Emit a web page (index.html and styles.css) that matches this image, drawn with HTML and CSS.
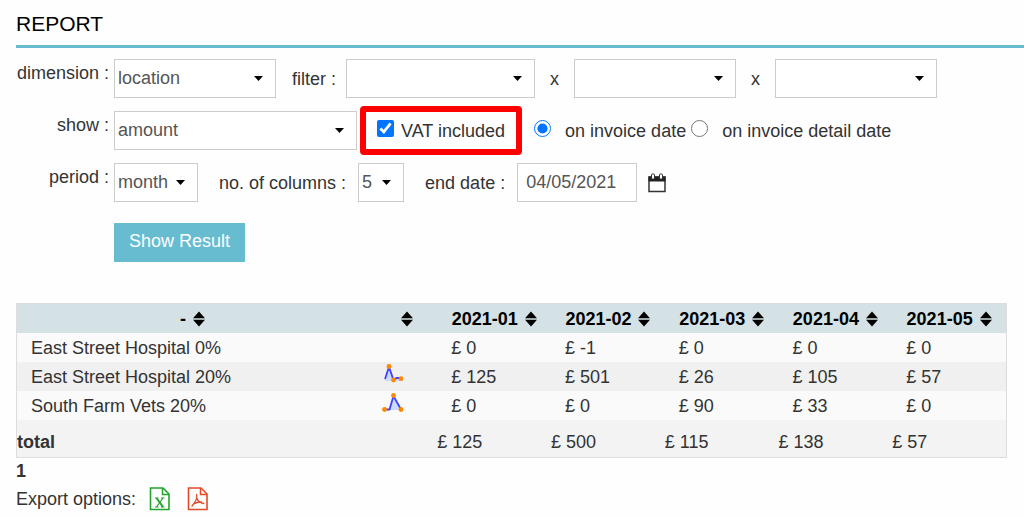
FILE: index.html
```html
<!DOCTYPE html>
<html lang="en">
<head>
<meta charset="utf-8">
<title>Report</title>
<meta name="viewport" content="width=device-width, initial-scale=1">
<link rel="stylesheet" href="styles.css">
</head>
<body>
<svg class="defs" width="0" height="0" aria-hidden="true">
  <symbol id="sort" viewBox="0 0 12 16"><path d="M6 .5 12 7.300H0zM0 8.700h12l-6 6.800z"/></symbol>
</svg>
<main class="page">
  <h1 class="title">REPORT</h1>

  <form class="filters">
    <div class="row">
      <label class="row-label" for="dimension">dimension :</label>
      <div class="controls">
        <select class="select medium" id="dimension"><option>location</option></select>
        <label class="text filter-text" for="filter1">filter :</label>
        <select class="select large" id="filter1"><option></option></select>
        <label class="text times" for="filter2">x</label>
        <select class="select medium" id="filter2"><option></option></select>
        <label class="text times" for="filter3">x</label>
        <select class="select medium" id="filter3"><option></option></select>
      </div>
    </div>

    <div class="row">
      <label class="row-label" for="show">show :</label>
      <div class="controls">
        <select class="select wide" id="show"><option>amount</option></select>
        <label class="vat"><input class="tick" type="checkbox" checked>VAT included</label>
        <label class="choice"><input class="tick" type="radio" name="basis" checked>on invoice date</label>
        <label class="choice"><input class="tick" type="radio" name="basis">on invoice detail date</label>
      </div>
    </div>

    <div class="row">
      <label class="row-label" for="period">period :</label>
      <div class="controls">
        <select class="select small" id="period"><option>month</option></select>
        <label class="text inline-text" for="columns">no. of columns :</label>
        <select class="select tiny" id="columns"><option>5</option></select>
        <label class="text inline-text" for="end">end date :</label>
        <input class="date" id="end" type="text" value="04/05/2021">
        <button class="calendar" type="button" aria-label="Pick a date">
          <svg width="18" height="20" viewBox="0 0 18 20"><path d="M1 4h16v14.500H1z" fill="#fff" stroke="#333" stroke-width="1.500"/><path d="M.5 3.500h17v5H.5z" fill="#222"/><rect x="3.500" y="1" width="3" height="5" rx="1" fill="#fff" stroke="#333"/><rect x="11.500" y="1" width="3" height="5" rx="1" fill="#fff" stroke="#333"/></svg>
        </button>
      </div>
    </div>

    <button class="submit" type="button">Show Result</button>
  </form>

  <table class="results">
    <colgroup><col><col class="col-spark"><col class="col-month"><col class="col-month"><col class="col-month"><col class="col-month"><col class="col-month"></colgroup>
    <thead>
      <tr>
        <th>- <svg class="sort"><use href="#sort"/></svg></th>
        <th class="spark-head"><svg class="sort"><use href="#sort"/></svg></th>
        <th>2021-01 <svg class="sort"><use href="#sort"/></svg></th>
        <th>2021-02 <svg class="sort"><use href="#sort"/></svg></th>
        <th>2021-03 <svg class="sort"><use href="#sort"/></svg></th>
        <th>2021-04 <svg class="sort"><use href="#sort"/></svg></th>
        <th>2021-05 <svg class="sort"><use href="#sort"/></svg></th>
      </tr>
    </thead>
    <tbody>
      <tr><td>East Street Hospital 0%</td><td></td><td>£ 0</td><td>£ -1</td><td>£ 0</td><td>£ 0</td><td>£ 0</td></tr>
      <tr>
        <td>East Street Hospital 20%</td>
        <td><svg class="spark" viewBox="0 0 24 20"><path d="M3 15 7 3l4.500 13 3-2H19v3H3z" fill="#cbdcfa"/><path d="M3 15 7 3l4.500 13 3-2H19" fill="none" stroke="#4040ff" stroke-width="1.800"/><g fill="#ff8800"><circle cx="7" cy="2.500" r="2.400"/><circle cx="11.500" cy="16" r="2.400"/><circle cx="19" cy="14.700" r="2.400"/></g></svg></td>
        <td>£ 125</td><td>£ 501</td><td>£ 26</td><td>£ 105</td><td>£ 57</td>
      </tr>
      <tr>
        <td>South Farm Vets 20%</td>
        <td><svg class="spark" viewBox="0 0 24 20"><path d="M7 17 11.500 3 19 17z" fill="#cbdcfa"/><path d="M3 16.500h4.500L11.500 3 19 16.500" fill="none" stroke="#4040ff" stroke-width="1.800"/><g fill="#ff8800"><circle cx="11.500" cy="2.500" r="2.400"/><circle cx="2.500" cy="16.500" r="2.400"/><circle cx="19" cy="16.500" r="2.400"/></g></svg></td>
        <td>£ 0</td><td>£ 0</td><td>£ 90</td><td>£ 33</td><td>£ 0</td>
      </tr>
    </tbody>
    <tfoot>
      <tr><th>total</th><td></td><td>£ 125</td><td>£ 500</td><td>£ 115</td><td>£ 138</td><td>£ 57</td></tr>
    </tfoot>
  </table>

  <div class="pager">1</div>

  <div class="export">
    <span>Export options:</span>
    <button class="file excel" type="button" aria-label="Export to Excel">
      <svg width="22" height="24" viewBox="0 0 22 24" fill="none" stroke="currentColor"><path d="M1.500 1H14l6 6v15.500H1.500z" stroke-width="1.600"/><path d="M13.500 1v6.500H20" stroke-width="1.500"/><path d="m7.500 11 6.500 9" stroke-width="2"/><path d="m14 11-6.500 9M6 11h3.500M12 11h3.500M6 20h3.500M12 20h3.500" stroke-width="1.200"/></svg>
    </button>
    <button class="file pdf" type="button" aria-label="Export to PDF">
      <svg width="22" height="24" viewBox="0 0 22 24" fill="none" stroke="currentColor"><path d="M1.500 1H14l6 6v15.500H1.500z" stroke-width="1.600"/><path d="M13.500 1v6.500H20" stroke-width="1.500"/><path d="M9.500 7.500c1 3-.5 7-4.500 11.500M9.800 11c1 3 3 5 7 5.500M6.500 17c2.500-1.500 5-2 8-2" stroke-width="1.300" stroke-linecap="round"/></svg>
    </button>
  </div>
</main>
</body>
</html>
```

FILE: styles.css
```css
* {
  box-sizing: border-box;
}

body {
  margin: 0;
  background: #fefefe;
  color: #333;
  font: 18px/26px "Liberation Sans", Arial, sans-serif;
}

.defs {
  display: block;
}

.page {
  padding: 8px 0 0 16px;
}

.title {
  margin: 0 0 11px;
  padding-bottom: 5px;
  border-bottom: 3px solid #67bcd0;
  color: #000;
  font-size: 21px;
  font-weight: 400;
  line-height: 32px;
}

.filters {
  display: flex;
  flex-direction: column;
  gap: 8px;
}

.row {
  display: grid;
  grid-template-columns: 93px 1fr;
  column-gap: 5px;
  align-items: center;
}

.row-label {
  padding-bottom: 12px;
  text-align: right;
  white-space: nowrap;
}

.controls {
  display: flex;
  align-items: center;
  white-space: nowrap;
}

.select,
.date {
  height: 39px;
  margin: 0;
  border: 1px solid #ccc;
  border-radius: 0;
  background-color: #fff;
  color: #555;
  font: inherit;
}

.select {
  flex: none;
  padding: 0 20px 1px 3px;
  appearance: none;
  background-image: url("data:image/svg+xml,%3Csvg xmlns='http://www.w3.org/2000/svg' width='9' height='5'%3E%3Cpath d='M0 0h9L4.500 5z'/%3E%3C/svg%3E");
  background-repeat: no-repeat;
  background-position: right 12px center;
}

.tiny { width: 46px; }
.small { width: 84px; }
.medium { width: 162px; }
.wide { width: 243px; }
.large { width: 189px; }

.filter-text {
  margin: 0 10px 0 16px;
}

.times {
  margin: 0 15px;
}

.inline-text {
  margin: 0 12px 0 21px;
}

.vat {
  display: flex;
  align-items: center;
  height: 49px;
  margin: 0 12px 0 3px;
  padding: 0 11px 0 11px;
  border: 6px solid #f00;
  border-radius: 4px;
}

.tick {
  width: 17px;
  height: 17px;
  margin: 0 7px 5px 0;
  accent-color: #0075ff;
}

.choice {
  display: flex;
  align-items: center;
  margin-right: 5px;
}

.choice .tick {
  margin-right: 14px;
}

.date {
  width: 120px;
  padding: 0 8px;
}

.calendar,
.file {
  display: flex;
  padding: 0;
  border: 0;
  background: none;
}

.calendar {
  margin-left: 11px;
}

.submit {
  align-self: flex-start;
  height: 39px;
  margin: 13px 0 0 98px;
  padding: 0 15px 4px;
  border: 0;
  background: #67bcd0;
  color: #fff;
  font: inherit;
}

.results {
  width: calc(100% - 17px);
  margin-top: 41px;
  border: 1px solid #ddd;
  border-spacing: 0;
  table-layout: fixed;
}

.col-spark { width: 7%; }
.col-month { width: 11.5%; }

.results th,
.results td {
  height: 29px;
  padding: 0;
  line-height: 26px;
  text-align: left;
  white-space: nowrap;
}

.results thead th {
  background: #d4e1e5;
  color: #000;
  text-align: center;
}

.results thead .spark-head {
  padding-left: 6px;
}

.results tbody td {
  padding-left: 14px;
}

.results tbody tr { background: #fafafa; }
.results tbody tr:nth-child(even) { background: #f0f0f0; }
.results tfoot tr { background: #f3f3f3; }

.results tfoot th,
.results tfoot td {
  height: 37px;
  padding-top: 6px;
}

.sort {
  width: 12px;
  height: 16px;
  margin-left: 2px;
  vertical-align: -2px;
}

.spark {
  display: block;
  width: 24px;
  height: 20px;
  margin-bottom: 6px;
}

.pager {
  font-weight: 700;
}

.export {
  display: flex;
  align-items: center;
  height: 30px;
}

.file {
  margin-left: 16px;
}

.excel {
  margin-left: 13px;
  color: #22a52c;
}

.pdf {
  color: #e4492a;
}
```
